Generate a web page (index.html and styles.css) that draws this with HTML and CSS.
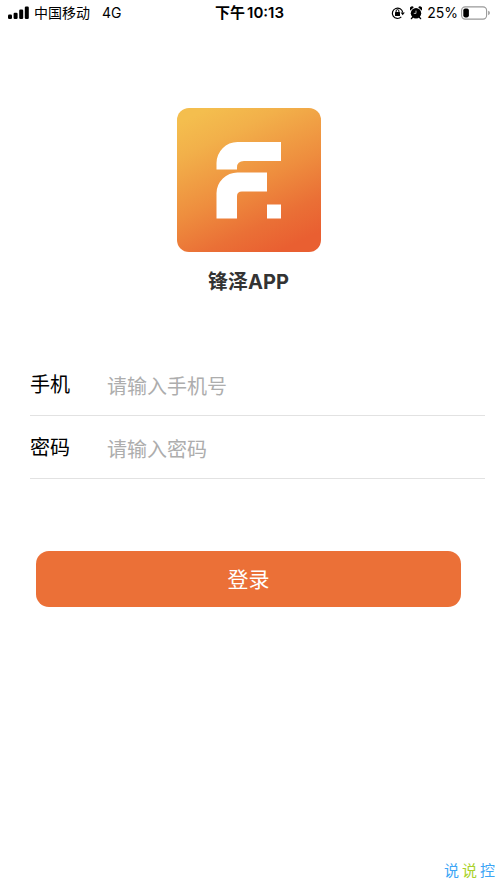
FILE: index.html
```html
<!DOCTYPE html>
<html lang="zh-CN">
<head>
<meta charset="utf-8">
<meta name="viewport" content="width=device-width, initial-scale=1">
<title>锋泽APP</title>
<link rel="stylesheet" href="styles.css">
</head>
<body>
<header class="status">
  <div class="status-left">
    <svg width="21" height="14" viewBox="0 0 21 14" aria-hidden="true">
      <rect x="0" y="8.5" width="4" height="4.500" rx="1.2"/>
      <rect x="5.6" y="6.7" width="4" height="6.300" rx="1.2"/>
      <rect x="11.2" y="3.5" width="4" height="9.500" rx="1.2"/>
      <rect x="16.8" y="0.5" width="4" height="12.500" rx="1.2"/>
    </svg>
    <span class="carrier">中国移动</span>
    <span>4G</span>
  </div>
  <div class="time"><span>下午</span><span>10:13</span></div>
  <div class="status-right">
    <svg class="icon" width="14" height="14" viewBox="0 0 14 14" aria-hidden="true">
      <path d="M10.3 10.9A5.2 5.2 0 1 1 11.7 6.5" fill="none" stroke="#000" stroke-width="1.2"/>
      <path d="M9.6 6.4h4.2l-2.1 2.800z"/>
      <rect x="4" y="6.1" width="5" height="3.8" rx=".5"/>
      <path d="M5.1 6.3V5a1.4 1.4 0 0 1 2.8 0v1.3" fill="none" stroke="#000"/>
    </svg>
    <svg class="icon" width="12" height="14" viewBox="0 0 12 14" aria-hidden="true">
      <circle cx="6" cy="7.2" r="5.2"/>
      <path d="M.4 4.4A2.3 2.3 0 0 1 3.8 1.2zM11.6 4.4A2.3 2.3 0 0 0 8.2 1.2z"/>
      <path d="M2.8 11l-1.4 1.6M9.2 11l1.4 1.6" stroke="#000" stroke-width="1.4" stroke-linecap="round"/>
      <path d="M6 4.600v2.800H3.8" fill="none" stroke="#fff" stroke-width=".7"/>
    </svg>
    <span>25%</span>
    <svg width="30" height="14" viewBox="0 0 30 14" aria-hidden="true">
      <rect x=".6" y=".9" width="25" height="12.2" rx="3.6" fill="none" stroke="#999" stroke-width="1.1"/>
      <rect x="2.3" y="2.6" width="5.6" height="8.8" rx="1.8"/>
      <path d="M27.2 4.8q1.7.6 1.7 2.2t-1.7 2.2z" fill="#999"/>
    </svg>
  </div>
</header>
<main class="login">
  <svg class="logo" viewBox="0 0 144 144" role="img" aria-label="锋泽">
    <defs>
      <linearGradient id="glow" x1=".22" y1="0" x2=".7" y2="1">
        <stop offset="0" stop-color="#f4be4e"/>
        <stop offset=".2" stop-color="#f2b04a"/>
        <stop offset=".55" stop-color="#ee8d3e"/>
        <stop offset=".8" stop-color="#ea7036"/>
        <stop offset="1" stop-color="#e95f31"/>
      </linearGradient>
    </defs>
    <rect width="144" height="144" rx="12" fill="url(#glow)"/>
    <g fill="#fff">
      <path d="M39.500 61.500V55A21 21 0 0 1 60.500 34H104V53H67Q60 53 60 59.500V61.500Z"/>
      <path d="M39.500 110.500V85A21 21 0 0 1 60.500 64.500H90V83.500H65Q60 83.500 60 88V110.500Z"/>
      <rect x="90" y="96.500" width="14" height="14"/>
    </g>
  </svg>
  <h1 class="name">锋泽APP</h1>
  <form class="form">
    <div class="field">
      <label for="phone">手机</label>
      <input id="phone" type="tel" placeholder="请输入手机号">
    </div>
    <div class="field">
      <label for="password">密码</label>
      <input id="password" type="password" placeholder="请输入密码">
    </div>
    <button class="submit" type="button">登录</button>
  </form>
</main>
<footer class="mark"><span>说</span><span class="green">说</span><span>控</span></footer>
</body>
</html>
```
FILE: styles.css
```css
* {
  box-sizing: border-box;
}

body {
  margin: 0;
  min-height: 100vh;
  display: flex;
  flex-direction: column;
  background: #fff;
  color: #000;
  font-family: Inter, "Noto Sans CJK SC", sans-serif;
}

svg {
  flex: none;
}

.status {
  display: grid;
  grid-template-columns: 1fr auto 1fr;
  align-items: center;
  height: 26px;
  padding: 0 6px 0 8px;
  font-size: 14px;
  line-height: 20px;
}

.status-left,
.status-right {
  display: flex;
  align-items: center;
}

.status-left {
  gap: 5px;
}

.status-right {
  justify-content: flex-end;
  gap: 3px;
}

.icon {
  margin-right: 2px;
}

.carrier {
  margin-right: 7px;
}

.time {
  display: flex;
  gap: 2px;
  font-size: 15px;
  font-weight: 600;
}

.login {
  flex: 1;
  display: flex;
  flex-direction: column;
  align-items: center;
  padding-top: 82px;
}

.logo {
  width: 144px;
  height: 144px;
}

.name {
  margin: 16px 0 0;
  color: #333;
  font-size: 20px;
  font-weight: 700;
  line-height: 28px;
}

.form {
  align-self: stretch;
  margin-top: 57px;
  padding: 0 12px 0 30px;
}

.field {
  display: flex;
  align-items: center;
  height: 63px;
  padding-top: 2px;
  border-bottom: 1px solid #e2e2e2;
}

.field label {
  width: 77px;
  font-size: 20px;
  line-height: 28px;
}

.field input {
  flex: 1;
  min-width: 0;
  padding: 4px 0 0;
  border: 0;
  outline: 0;
  background: none;
  color: #000;
  font: 400 20px/28px Inter, "Noto Sans CJK SC", sans-serif;
}

.field input::placeholder {
  color: #adadad;
  opacity: 1;
}

.submit {
  display: block;
  width: calc(100% - 30px);
  height: 56px;
  margin: 72px 0 0 6px;
  padding: 2px 0 0;
  border: 0;
  border-radius: 13px;
  background: #eb7037;
  color: #fff;
  font: 400 21px/28px Inter, "Noto Sans CJK SC", sans-serif;
}

.mark {
  display: flex;
  justify-content: flex-end;
  gap: 3px;
  padding: 0 2px 2px;
  color: #3da5f5;
  font-size: 15px;
  line-height: 20px;
}

.green {
  color: #a9d129;
}
```
